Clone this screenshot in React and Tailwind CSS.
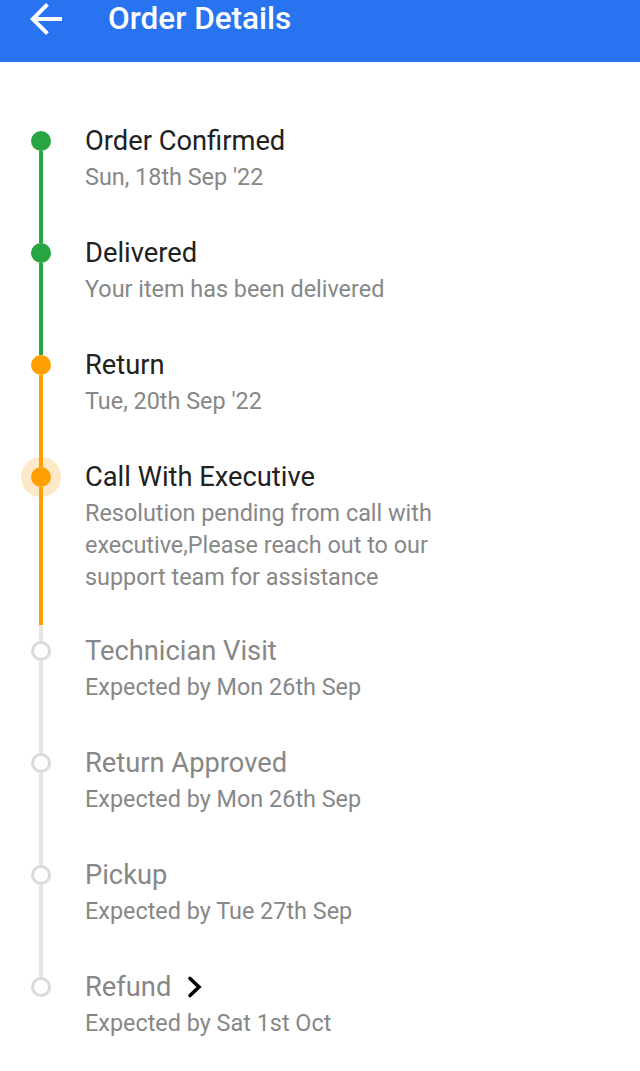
import React from "react";

const steps = [
  { title: "Order Confirmed", sub: "Sun, 18th Sep '22", state: "green", top: "green", bottom: "green" },
  { title: "Delivered", sub: "Your item has been delivered", state: "green", top: "green", bottom: "green" },
  { title: "Return", sub: "Tue, 20th Sep '22", state: "orange", top: "green", bottom: "orange" },
  {
    title: "Call With Executive",
    sub: "Resolution pending from call with executive,Please reach out to our support team for assistance",
    state: "active",
    top: "orange",
    bottom: "orange",
    tail: true,
  },
  { title: "Technician Visit", sub: "Expected by Mon 26th Sep", state: "pending", top: "gray", bottom: "gray" },
  { title: "Return Approved", sub: "Expected by Mon 26th Sep", state: "pending", top: "gray", bottom: "gray" },
  { title: "Pickup", sub: "Expected by Tue 27th Sep", state: "pending", top: "gray", bottom: "gray" },
  { title: "Refund", sub: "Expected by Sat 1st Oct", state: "pending", top: "gray", bottom: null, chevron: true },
];

const lineColor = {
  green: "bg-[#26a541]",
  orange: "bg-[#ff9f00]",
  gray: "bg-[#e6e6e6]",
};

function Dot({ state }) {
  if (state === "green") {
    return <div className="w-[20px] h-[20px] rounded-full bg-[#26a541] shrink-0"></div>;
  }
  if (state === "orange") {
    return <div className="w-[20px] h-[20px] rounded-full bg-[#ff9f00] shrink-0"></div>;
  }
  if (state === "active") {
    return (
      <div className="w-[20px] h-[20px] rounded-full bg-[#ff9f00] shrink-0 shadow-[0_0_0_10px_#fde9c8]"></div>
    );
  }
  return (
    <div className="w-[20px] h-[20px] rounded-full border-[3px] border-[#dadada] bg-white shrink-0"></div>
  );
}

function Step({ step, first }) {
  const pending = step.state === "pending";
  return (
    <div className="flex">
      <div className="w-[82px] flex flex-col items-center shrink-0">
        <div className={`relative z-10 w-[4px] h-[8px] ${first ? "" : lineColor[step.top]}`}></div>
        <Dot state={step.state} />
        {step.bottom ? (
          <div className="relative z-10 w-[4px] flex-1 flex flex-col">
            <div className={`flex-1 ${lineColor[step.bottom]}`}></div>
            {step.tail && <div className="h-[8px] bg-[#e6e6e6]"></div>}
          </div>
        ) : (
          <div className="flex-1"></div>
        )}
      </div>
      <div className={`pl-[3px] w-[364px] ${step.tail ? "pb-[40px]" : "pb-[42px]"}`}>
        <div
          className={`flex items-center gap-[15px] text-[27.3px] leading-[36px] mb-[2px] ${
            pending ? "text-[#878787]" : "text-[#212121]"
          }`}
        >
          <span>{step.title}</span>
          {step.chevron && (
            <svg width="18" height="24" viewBox="0 0 18 24" className="shrink-0">
              <polyline
                points="4,3.5 13,12 4,20.5"
                fill="none"
                stroke="#000"
                strokeWidth="3.6"
                strokeLinecap="round"
                strokeLinejoin="miter"
              />
            </svg>
          )}
        </div>
        <div className="text-[23.4px] leading-[32px] text-[#878787]">{step.sub}</div>
      </div>
    </div>
  );
}

export default function App() {
  return (
    <div className="w-[640px] min-h-[1071px] bg-white font-['Roboto',sans-serif]">
      <div className="h-[62px] bg-[#2874f0] flex items-start">
        <svg
          viewBox="4 4 16 16"
          width="32"
          height="32"
          className="ml-[30px] mt-[3px] fill-white"
        >
          <path d="M20 11H7.83l5.59-5.59L12 4l-8 8 8 8 1.41-1.41L7.83 13H20v-2z" />
        </svg>
        <h1 className="ml-[46px] text-[31.5px] leading-[38px] font-medium text-white">Order Details</h1>
      </div>
      <div className="pt-[61px]">
        {steps.map((s, i) => (
          <Step key={s.title} step={s} first={i === 0} />
        ))}
      </div>
    </div>
  );
}
